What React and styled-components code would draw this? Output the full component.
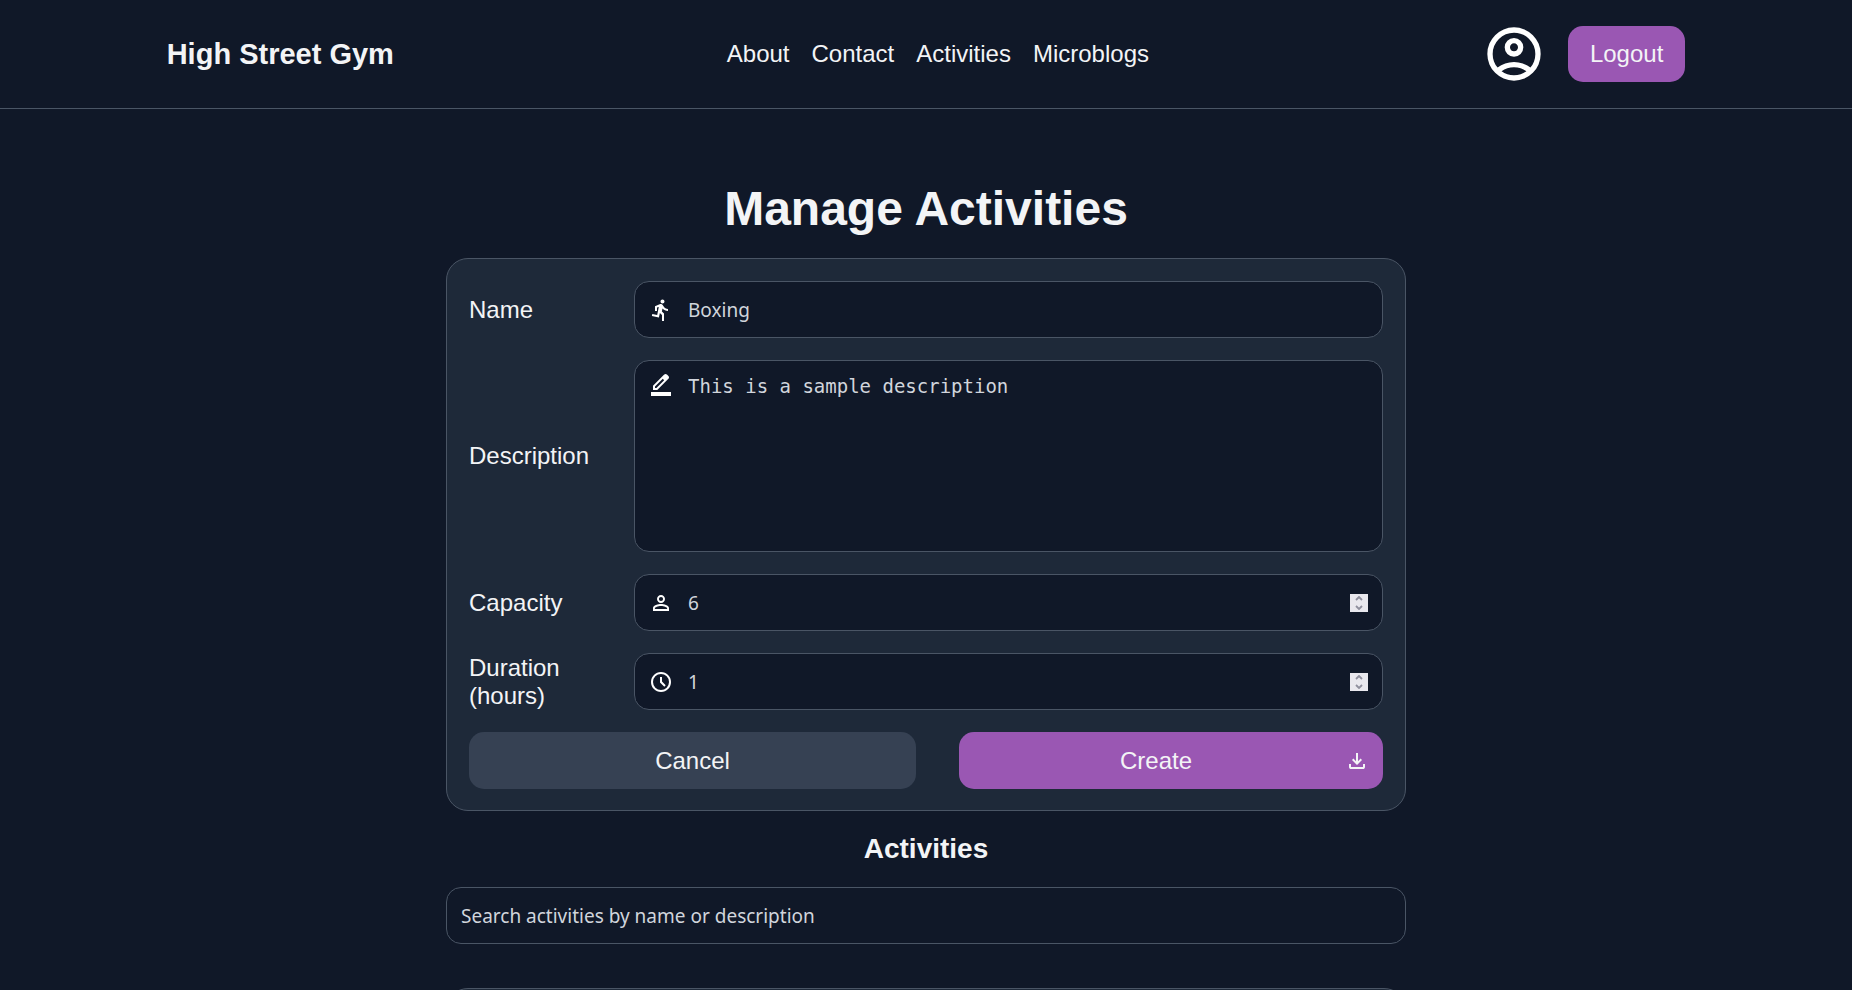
import React, { useRef } from "react";
import styled, { createGlobalStyle, ThemeProvider } from "styled-components";
import { MdDirectionsRun, MdPersonOutline } from "react-icons/md";

const theme = {
  page: "#101828",
  panel: "#1e2939",
  line: "#4a5565",
  muted: "#364153",
  accent: "#9a57b3",
  text: "#f3f4f6",
  hint: "#d1d5dc",
  radius: "15px",
};

const GlobalStyle = createGlobalStyle`
  *, *::before, *::after { box-sizing: border-box; }
  html { scrollbar-width: none; }
  body {
    margin: 0;
    background: ${theme.page};
    color: ${theme.text};
    font-family: "Liberation Sans", Arial, sans-serif;
    font-size: 24px;
    line-height: 28px;
  }
`;

const Page = styled.div`
  height: 100vh;
  overflow-y: auto;
  scrollbar-width: none;
`;

const Header = styled.header`
  display: flex;
  align-items: center;
  justify-content: space-between;
  padding: 26px 9%;
  border-bottom: 1px solid ${(p) => p.theme.line};
`;

const Brand = styled.a`
  color: inherit;
  font-size: 29px;
  font-weight: 700;
  line-height: 32px;
  text-decoration: none;
`;

const Nav = styled.nav`
  display: flex;
  gap: 22px;
`;

const NavLink = styled.a`
  color: inherit;
  text-decoration: none;
`;

const Account = styled.div`
  display: flex;
  align-items: center;
  gap: 22px;
  height: 56px;
`;

const ProfileLink = styled.a`
  display: flex;
  color: #fff;
`;

const Button = styled.button`
  display: flex;
  align-items: center;
  justify-content: center;
  gap: 6px;
  border: 0;
  border-radius: ${(p) => p.theme.radius};
  padding: 14px ${(p) => (p.$wide ? "14px" : "22px")};
  min-height: ${(p) => (p.$wide ? "57px" : "56px")};
  background: ${(p) => (p.$tone === "muted" ? p.theme.muted : p.theme.accent)};
  color: ${(p) => p.theme.text};
  font: inherit;
  cursor: pointer;
`;

const ButtonText = styled.span`
  flex: 1;
`;

const Main = styled.main`
  display: flex;
  flex-direction: column;
  gap: 22px;
  width: 100%;
  max-width: 960px;
  margin: 72px auto 0;
`;

const Title = styled.h1`
  margin: 0;
  font-size: 48px;
  line-height: 55px;
  text-align: center;
`;

const Subtitle = styled.h2`
  margin: 0;
  font-size: 28px;
  line-height: 32px;
  text-align: center;
`;

const Panel = styled.form`
  display: flex;
  flex-direction: column;
  gap: 22px;
  padding: 22px 22px 21px;
  border: 1px solid ${(p) => p.theme.line};
  border-radius: 22px;
  background: ${(p) => p.theme.panel};
`;

const Row = styled.div`
  display: grid;
  grid-template-columns: 143px 1fr;
  column-gap: 22px;
  align-items: center;
`;

const Actions = styled.div`
  display: grid;
  grid-template-columns: 447fr 424fr;
  column-gap: 43px;
`;

const Field = styled.div`
  display: flex;
  align-items: ${(p) => (p.$tall ? "flex-start" : "center")};
  gap: 15px;
  height: ${(p) => (p.$tall ? "192px" : "57px")};
  padding: ${(p) => (p.$tall ? "11px" : "0")} 14px 0;
  border: 1px solid ${(p) => p.theme.line};
  border-radius: ${(p) => p.theme.radius};
  background: ${(p) => p.theme.page};
  color: #fff;
`;

const TextInput = styled.input`
  flex: 1;
  min-width: 0;
  height: 100%;
  padding: 0;
  border: 0;
  outline: 0;
  background: transparent;
  color: ${(p) => p.theme.hint};
  font-family: "Noto Sans", sans-serif;
  font-size: 19px;
  appearance: textfield;

  &::placeholder { color: ${(p) => p.theme.hint}; opacity: 1; }
  &::-webkit-inner-spin-button,
  &::-webkit-outer-spin-button { appearance: none; margin: 0; }
`;

const TextArea = styled.textarea`
  flex: 1;
  min-width: 0;
  height: 100%;
  padding: 3px 0 0;
  border: 0;
  outline: 0;
  resize: none;
  background: transparent;
  color: ${(p) => p.theme.hint};
  font-family: "DejaVu Sans Mono", monospace;
  font-size: 19px;
  line-height: 22px;

  &::placeholder { color: ${(p) => p.theme.hint}; opacity: 1; }
`;

const Stepper = styled.div`
  display: flex;
  flex-direction: column;
  width: 18px;
  height: 18px;
  background: #e9e8ee;
`;

const StepButton = styled.button`
  display: flex;
  justify-content: center;
  align-items: center;
  height: 9px;
  padding: 0;
  border: 0;
  background: transparent;
  color: #8f8f9d;
`;

const ResultsSection = styled.section`
  margin-top: 22px;
  padding: 22px;
  border: 1px solid ${(p) => p.theme.line};
  border-radius: 22px;
  background: ${(p) => p.theme.panel};
`;

const Glyph = styled.svg`
  flex: none;
  fill: currentColor;
`;

const icons = {
  account:
    "M5.85 17.1q1.275-.975 2.85-1.537T12 15t3.3.563t2.85 1.537q.875-1.025 1.363-2.325T20 12q0-3.325-2.337-5.663T12 4T6.337 6.338T4 12q0 1.475.488 2.775T5.85 17.1M12 13q-1.475 0-2.488-1.012T8.5 9.5t1.013-2.488T12 6t2.488 1.013T15.5 9.5t-1.012 2.488T12 13m0 9q-2.075 0-3.9-.788t-3.175-2.137T2.788 15.9T2 12t.788-3.9t2.137-3.175T8.1 2.788T12 2t3.9.788t3.175 2.137T21.213 8.1T22 12t-.788 3.9t-2.137 3.175t-3.175 2.138T12 22m0-2q1.325 0 2.5-.387t2.15-1.113q-.975-.725-2.15-1.112T12 17t-2.5.388T7.35 18.5q.975.725 2.15 1.113T12 20m0-9q.65 0 1.075-.425T13.5 9.5t-.425-1.075T12 8t-1.075.425T10.5 9.5t.425 1.075T12 11",
  edit:
    "M2 24v-4h20v4zM4 18v-4.25L15.2 2.55q.275-.275.638-.412T16.6 2q.375 0 .725.15t.625.425L19.4 4.05q.3.275.437.637T19.975 5.4q0 .4-.137.763t-.438.637L8.25 18zm2-2h1.4l7.75-7.75-.675-.725-.725-.675L6 14.6z",
  clock:
    "m15.3 16.7l1.4-1.4l-3.7-3.7V7h-2v5.4zM12 22q-2.075 0-3.9-.788t-3.175-2.137T2.788 15.9T2 12t.788-3.9t2.137-3.175T8.1 2.788T12 2t3.9.788t3.175 2.137T21.213 8.1T22 12t-.788 3.9t-2.137 3.175t-3.175 2.138T12 22m0-2q3.325 0 5.663-2.337T20 12t-2.337-5.663T12 4T6.337 6.338T4 12t2.338 5.663T12 20",
  download:
    "m12 16l-5-5l1.4-1.45l2.6 2.6V4h2v8.15l2.6-2.6L17 11zm-6 4q-.825 0-1.412-.587T4 18v-3h2v3h12v-3h2v3q0 .825-.587 1.413T18 20z",
};

function Icon({ name, size = 24 }) {
  return (
    <Glyph width={size} height={size} viewBox="0 0 24 24" fillRule="evenodd" aria-hidden="true">
      <path d={icons[name]} />
    </Glyph>
  );
}

function Chevron({ down }) {
  return (
    <svg width="8" height="5" viewBox="0 0 8 5" aria-hidden="true">
      <path
        d={down ? "M1 1l3 3 3-3" : "M1 4l3-3 3 3"}
        fill="none"
        stroke="currentColor"
        strokeWidth="1.8"
      />
    </svg>
  );
}

function NumberField({ id, placeholder, icon }) {
  const input = useRef(null);
  return (
    <Field>
      {icon}
      <TextInput ref={input} id={id} type="number" min="1" placeholder={placeholder} />
      <Stepper>
        <StepButton type="button" aria-label="Increase" onClick={() => input.current.stepUp()}>
          <Chevron />
        </StepButton>
        <StepButton type="button" aria-label="Decrease" onClick={() => input.current.stepDown()}>
          <Chevron down />
        </StepButton>
      </Stepper>
    </Field>
  );
}

export default function App() {
  return (
    <ThemeProvider theme={theme}>
      <GlobalStyle />
      <Page>
        <Header>
          <Brand href="#home">High Street Gym</Brand>
          <Nav>
            <NavLink href="#about">About</NavLink>
            <NavLink href="#contact">Contact</NavLink>
            <NavLink href="#activities">Activities</NavLink>
            <NavLink href="#microblogs">Microblogs</NavLink>
          </Nav>
          <Account>
            <ProfileLink href="#profile" aria-label="Profile">
              <Icon name="account" size={64} />
            </ProfileLink>
            <Button type="button">Logout</Button>
          </Account>
        </Header>

        <Main>
          <Title>Manage Activities</Title>
          <Panel onSubmit={(e) => e.preventDefault()}>
            <Row>
              <label htmlFor="name">Name</label>
              <Field>
                <MdDirectionsRun size={24} />
                <TextInput id="name" type="text" placeholder="Boxing" />
              </Field>
            </Row>
            <Row>
              <label htmlFor="description">Description</label>
              <Field $tall>
                <Icon name="edit" />
                <TextArea id="description" placeholder="This is a sample description" />
              </Field>
            </Row>
            <Row>
              <label htmlFor="capacity">Capacity</label>
              <NumberField id="capacity" placeholder="6" icon={<MdPersonOutline size={24} />} />
            </Row>
            <Row>
              <label htmlFor="duration">Duration (hours)</label>
              <NumberField id="duration" placeholder="1" icon={<Icon name="clock" />} />
            </Row>
            <Actions>
              <Button type="reset" $wide $tone="muted">Cancel</Button>
              <Button type="submit" $wide>
                <ButtonText>Create</ButtonText>
                <Icon name="download" />
              </Button>
            </Actions>
          </Panel>
          <Subtitle>Activities</Subtitle>
          <Field>
            <TextInput
              type="search"
              aria-label="Search activities"
              placeholder="Search activities by name or description"
            />
          </Field>
          <ResultsSection aria-label="Activity list" />
        </Main>
      </Page>
    </ThemeProvider>
  );
}
